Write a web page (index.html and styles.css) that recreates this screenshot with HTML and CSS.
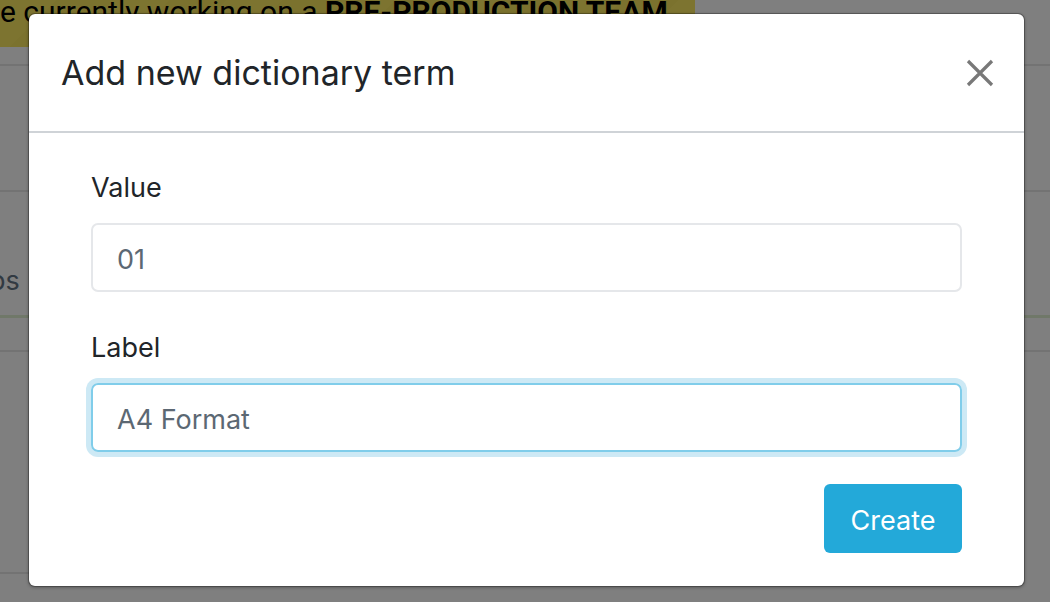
FILE: index.html
```html
<!DOCTYPE html>
<html>
<head>
<meta charset="utf-8">
<link rel="stylesheet" href="styles.css">
</head>
<body>
<div class="page">
  <div class="banner">e currently working on a <b>PRE-PRODUCTION TEAM</b></div>
  <div class="row row-a"></div>
  <div class="row row-b"></div>
  <div class="row row-c"><span class="tab">ps</span></div>
  <div class="row row-d"></div>
  <div class="row row-e"><div class="col"></div><div class="col"></div></div>
</div>
<div class="backdrop"></div>
<div class="modal">
  <div class="modal-header">
    <h1 class="modal-title">Add new dictionary term</h1>
    <button class="close" aria-label="Close">
      <svg width="28" height="28" viewBox="0 0 28 28"><path d="M2 2 L26 26 M26 2 L2 26" stroke="#787878" stroke-width="3.2" fill="none"/></svg>
    </button>
  </div>
  <div class="modal-body">
    <div class="group">
      <label class="lbl">Value</label>
      <div class="input">01</div>
    </div>
    <div class="group">
      <label class="lbl">Label</label>
      <div class="input focus">A4 Format</div>
    </div>
    <div class="footer">
      <button class="btn">Create</button>
    </div>
  </div>
</div>
</body>
</html>
```

FILE: styles.css
```css
* { box-sizing: border-box; }
html, body { margin: 0; padding: 0; }
body {
  width: 1050px;
  height: 602px;
  overflow: hidden;
  background: #ffffff;
  font-family: Inter, "Noto Sans", sans-serif;
  position: relative;
}
.page { width: 1050px; }
.banner {
  width: 695px;
  height: 47px;
  background: repeating-linear-gradient(135deg, #fbe961 0 40px, #f7e55c 40px 80px);
  font-family: Roboto, sans-serif;
  font-size: 30px;
  line-height: 24px;
  color: #000;
  white-space: nowrap;
  overflow: hidden;
}
.banner b { font-weight: 700; }
.row { width: 1050px; border-bottom: 2px solid #e6e6e6; }
.row-a { height: 19px; }
.row-b { height: 126px; }
.row-c { height: 126px; border-bottom: 3px solid #e0f0d2; position: relative; }
.tab {
  position: absolute;
  left: -11px;
  top: 72px;
  font-family: Inter, sans-serif;
  font-size: 27px;
  color: #657585;
}
.row-d { height: 34px; }
.row-e { height: 222px; display: flex; border-bottom: none; }
.row-e .col { height: 222px; border-bottom: 2px solid #e6e6e6; }
.row-e .col:first-child { width: 546px; border-right: 2px solid #e6e6e6; }
.row-e .col:last-child { flex: 1; border-bottom: none; }

.backdrop {
  position: absolute;
  inset: 0;
  background: rgba(0,0,0,0.5);
}
.modal {
  position: absolute;
  left: 28px;
  top: 13px;
  width: 997px;
  height: 574px;
  background: #fff;
  border: 1px solid rgba(0,0,0,0.25);
  border-radius: 7px;
  box-shadow: 0 1px 3px rgba(0,0,0,0.25);
  background-clip: padding-box;
  display: flex;
  flex-direction: column;
}
.modal-header {
  height: 119px;
  border-bottom: 2px solid #cfd3d7;
  display: flex;
  align-items: center;
  justify-content: space-between;
  padding: 0 30px 0 32px;
}
.modal-title {
  margin: 0;
  font-family: Inter, sans-serif;
  font-weight: 400;
  font-size: 34px;
  color: #212529;
}
.close {
  border: 0;
  background: none;
  padding: 0;
  width: 28px;
  height: 28px;
  display: flex;
}
.modal-body {
  padding: 36px 62px 0 62px;
}
.group { margin-bottom: 37px; }
.group + .group { margin-bottom: 0; }
.lbl {
  display: block;
  font-size: 27px;
  line-height: 37px;
  color: #212529;
  margin-bottom: 17px;
}
.input {
  height: 69px;
  border: 2px solid #e5e7ea;
  border-radius: 7px;
  padding: 3px 24px 0;
  font-size: 27px;
  line-height: 64px;
  color: #5c6873;
}
.input.focus {
  border-color: #80cdea;
  box-shadow: 0 0 0 5px #cde9f5;
}
.footer {
  display: flex;
  justify-content: flex-end;
  margin-top: 32px;
}
.btn {
  width: 138px;
  height: 69px;
  border: 0;
  border-radius: 6px;
  background: #23a9d9;
  color: #fff;
  font-family: Inter, sans-serif;
  font-size: 27px;
  padding: 4px 0 0;
}
```
